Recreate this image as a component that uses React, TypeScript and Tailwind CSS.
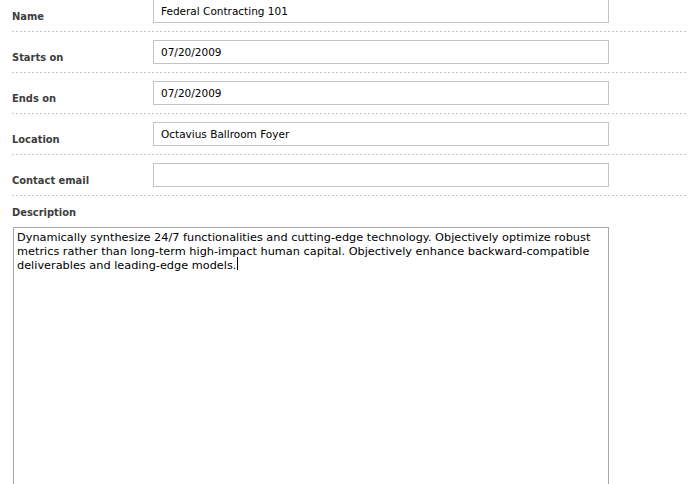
import React from "react";

// Event edit form: labelled rows separated by dashed rules, then a big description box.

const fields = [
  { label: "Name", value: "Federal Contracting 101" },
  { label: "Starts on", value: "07/20/2009" },
  { label: "Ends on", value: "07/20/2009" },
  { label: "Location", value: "Octavius Ballroom Foyer" },
  { label: "Contact email", value: "" },
];

const description =
  "Dynamically synthesize 24/7 functionalities and cutting-edge technology. Objectively optimize robust metrics rather than long-term high-impact human capital. Objectively enhance backward-compatible deliverables and leading-edge models.";

function Rule() {
  return <div className="h-px w-full bg-[repeating-linear-gradient(to_right,#c9c9c9_0_2px,transparent_2px_4px)]" />;
}

export default function App() {
  return (
    <div className="min-h-[484px] overflow-hidden bg-white pl-3 font-['DejaVu_Sans',sans-serif] text-[#333]">
      <div className="-mt-[9px]">
        {fields.map((f) => (
          <div key={f.label}>
            <div className="flex items-end py-2">
              <label className="w-[141px] shrink-0 font-['DejaVu_Sans_Condensed','DejaVu_Sans',sans-serif] text-[11px] font-bold leading-[13px] text-[#3d3d3d]">
                {f.label}
              </label>
              <input
                type="text"
                defaultValue={f.value}
                className="h-6 w-[456px] border border-[#c4c4c4] bg-white px-[7px] text-[10.5px] text-black outline-none"
              />
            </div>
            <Rule />
          </div>
        ))}

        <div className="pt-[10px]">
          <label className="block font-['DejaVu_Sans_Condensed','DejaVu_Sans',sans-serif] text-[11px] font-bold leading-[13px] text-[#3d3d3d]">
            Description
          </label>
          <div className="relative mt-[8px] ml-px w-[596px]">
            <textarea
              defaultValue={description}
              className="block h-[300px] w-full resize-none border border-[#a8a8a8] bg-white px-[3px] pt-[3px] text-[11.3px] leading-[14px] text-black outline-none"
            />
            {/* caret after the last word */}
            <span className="absolute left-[224px] top-[30px] h-[13px] w-px bg-black" />
          </div>
        </div>
      </div>
    </div>
  );
}
